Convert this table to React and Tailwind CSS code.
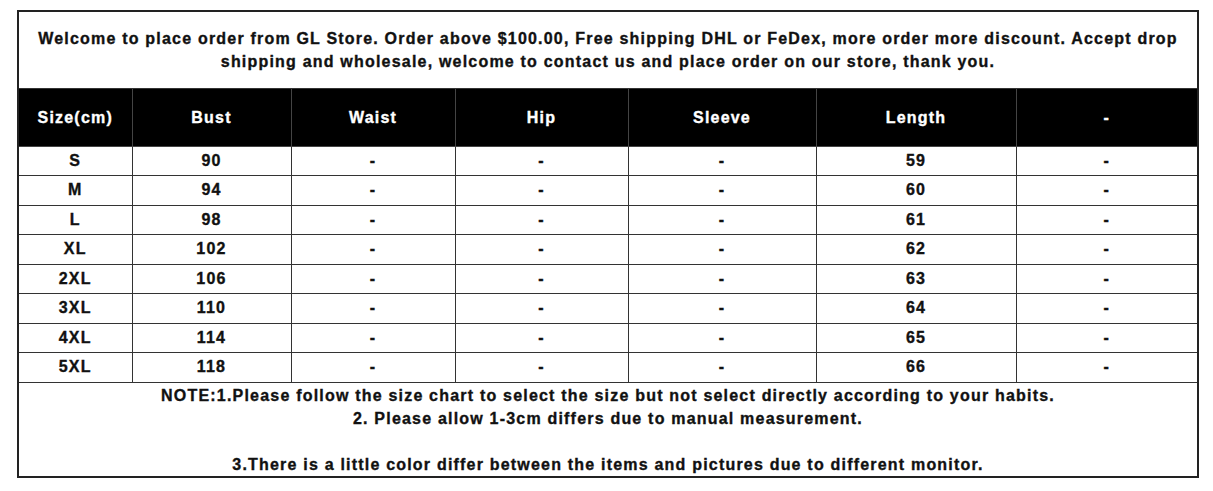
import React from "react";

const columns = ["Size(cm)", "Bust", "Waist", "Hip", "Sleeve", "Length", "-"];
const widths = [114, 159, 164, 173, 188, 200, 182];

const rows = [
  ["S", "90", "-", "-", "-", "59", "-"],
  ["M", "94", "-", "-", "-", "60", "-"],
  ["L", "98", "-", "-", "-", "61", "-"],
  ["XL", "102", "-", "-", "-", "62", "-"],
  ["2XL", "106", "-", "-", "-", "63", "-"],
  ["3XL", "110", "-", "-", "-", "64", "-"],
  ["4XL", "114", "-", "-", "-", "65", "-"],
  ["5XL", "118", "-", "-", "-", "66", "-"],
];

const App = () => {
  return (
    <div className="w-[1213px] h-[491px] bg-white pt-[10px] pl-[17px] font-['Liberation_Sans',Arial,sans-serif] font-bold text-[#111] tracking-[1.2px] [-webkit-text-stroke:0.35px_currentColor]">
      <table className="w-[1180px] table-fixed border-collapse border-2 border-[#222]">
        <colgroup>
          {widths.map((w, i) => (
            <col key={i} style={{ width: w }} />
          ))}
        </colgroup>
        <tbody>
          <tr>
            <td
              colSpan={7}
              className="h-[77px] border border-[#333] px-4 text-center text-[16px] leading-[23px]"
            >
              Welcome to place order from GL Store. Order above $100.00, Free
              shipping DHL or FeDex, more order more discount. Accept drop
              shipping and wholesale, welcome to contact us and place order on
              our store, thank you.
            </td>
          </tr>
          <tr className="bg-black text-white">
            {columns.map((c, i) => (
              <td
                key={i}
                className="h-[58px] border border-[#444] pt-[2px] text-center text-[16px]"
              >
                {c}
              </td>
            ))}
          </tr>
          {rows.map((r, ri) => (
            <tr key={ri}>
              {r.map((v, ci) => (
                <td
                  key={ci}
                  className="h-[29.5px] border border-[#333] text-center text-[16px] leading-none"
                >
                  {v}
                </td>
              ))}
            </tr>
          ))}
          <tr>
            <td
              colSpan={7}
              className="h-[95px] border border-[#333] pt-[1px] text-center align-top text-[16px] leading-[23px]"
            >
              <div>
                NOTE:1.Please follow the size chart to select the size but not
                select directly according to your habits.
              </div>
              <div>2. Please allow 1-3cm differs due to manual measurement.</div>
              <div className="h-[23px]" />
              <div>
                3.There is a little color differ between the items and pictures
                due to different monitor.
              </div>
            </td>
          </tr>
        </tbody>
      </table>
    </div>
  );
};

export default App;
